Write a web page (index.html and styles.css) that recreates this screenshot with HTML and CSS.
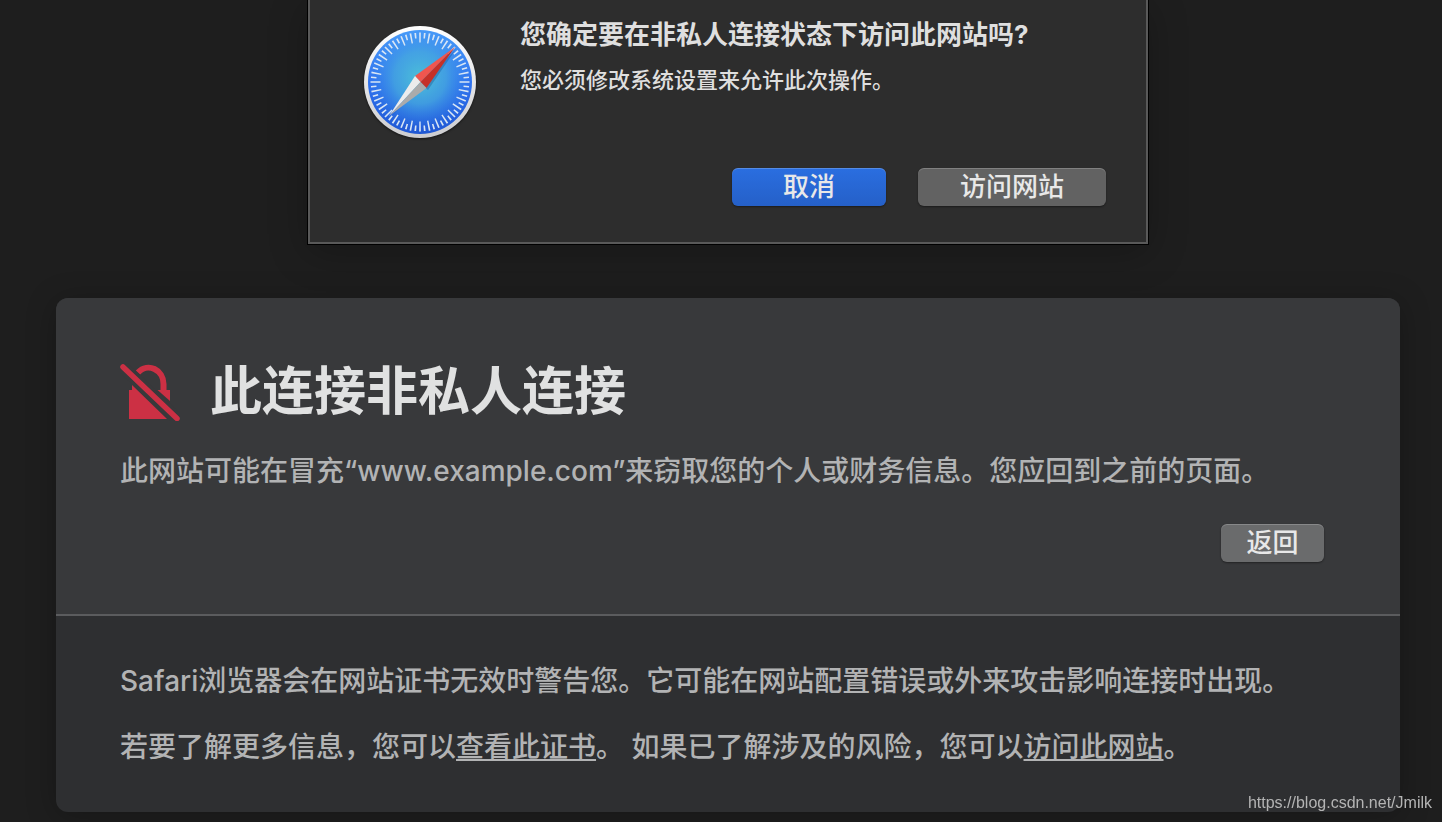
FILE: index.html
```html
<!DOCTYPE html>
<html lang="zh-CN">
<head>
    <meta charset="UTF-8">
    <meta name="viewport" content="width=device-width, initial-scale=1.0">
    <title>此连接非私人连接</title>
    <link rel="stylesheet" href="styles.css">
</head>
<body>
    <main class="page">
        <section class="dialog" role="alertdialog" aria-labelledby="dialogTitle" aria-describedby="dialogText">
            <svg class="compass" viewBox="0 0 112 112" aria-hidden="true">
                <defs>
                    <linearGradient id="ring" x1="0" y1="0" x2="0" y2="1">
                        <stop offset="0" stop-color="#ffffff"/>
                        <stop offset="1" stop-color="#cdcdd0"/>
                    </linearGradient>
                    <linearGradient id="edge" x1="0" y1="0" x2="0" y2="1">
                        <stop offset="0" stop-color="#4a9dfa"/>
                        <stop offset="0.5" stop-color="#2f72ef"/>
                        <stop offset="1" stop-color="#2058d4"/>
                    </linearGradient>
                    <radialGradient id="glow" cx="0.5" cy="0.46" r="0.5">
                        <stop offset="0" stop-color="#4cc0d8"/>
                        <stop offset="0.5" stop-color="#45a8df" stop-opacity="0.8"/>
                        <stop offset="1" stop-color="#3583ee" stop-opacity="0"/>
                    </radialGradient>
                </defs>
                <circle cx="56" cy="56" r="56" fill="url(#ring)"/>
                <circle cx="56" cy="56" r="52" fill="url(#edge)"/>
                <circle cx="56" cy="56" r="52" fill="url(#glow)"/>
                <!-- 32 long and 32 short ticks -->
                <circle cx="56" cy="56" r="44.500" fill="none" stroke="#d8e6f5" stroke-width="10" pathLength="320" stroke-dasharray="1.8 8.2" stroke-dashoffset="0.9"/>
                <circle cx="56" cy="56" r="46.500" fill="none" stroke="#d8e6f5" stroke-width="5.500" pathLength="320" stroke-dasharray="1.8 8.2" stroke-dashoffset="-4.1"/>
                <path d="M92 23L64 64L56 58L27 91Z" fill="#174886" opacity="0.35"/>
                <path d="M91 21L51 50L56.500 56Z" fill="#f0564f"/>
                <path d="M91 21L62.500 62L56.500 56Z" fill="#c63028"/>
                <path d="M25 90L51 50L56.500 56Z" fill="#ececec"/>
                <path d="M25 90L62.500 62L56.500 56Z" fill="#ababab"/>
            </svg>
            <div class="dialog-body">
                <h2 class="dialog-title" id="dialogTitle">您确定要在非私人连接状态下访问此网站吗?</h2>
                <p class="dialog-text" id="dialogText">您必须修改系统设置来允许此次操作。</p>
                <div class="dialog-actions">
                    <button class="button button-primary" type="button">取消</button>
                    <button class="button button-visit" type="button">访问网站</button>
                </div>
            </div>
        </section>

        <article class="card">
            <section class="card-main">
                <header class="card-header">
                    <svg class="lock" viewBox="0 0 60 58" aria-hidden="true">
                        <path d="M9 27H12V22L47 56H9Z" fill="#cc3044"/>
                        <path d="M18 9.500C28 -1 43.500 7 43.500 21V28" fill="none" stroke="#cc3044" stroke-width="6"/>
                        <path d="M37.500 27H50V38Z" fill="#cc3044"/>
                        <path d="M3 4L57 55.500" stroke="#38393b" stroke-width="12"/>
                        <path d="M3 4L57 55.500" stroke="#cc3044" stroke-width="5.500" stroke-linecap="round"/>
                    </svg>
                    <h1 class="card-title">此连接非私人连接</h1>
                </header>
                <p class="card-text">此网站可能在冒充“www.example.com”来窃取您的个人或财务信息。您应回到之前的页面。</p>
                <div class="card-actions">
                    <button class="button button-back" type="button">返回</button>
                </div>
            </section>
            <section class="card-details">
                <p class="card-text">Safari浏览器会在网站证书无效时警告您。它可能在网站配置错误或外来攻击影响连接时出现。</p>
                <p class="card-text">若要了解更多信息，您可以<a href="#certificate">查看此证书</a>。 如果已了解涉及的风险，您可以<a href="#visit">访问此网站</a>。</p>
            </section>
        </article>
    </main>
    <div class="watermark">https://blog.csdn.net/Jmilk</div>
</body>
</html>
```

FILE: styles.css
```css
* {
    box-sizing: border-box;
}

body {
    margin: 0;
    min-height: 100vh;
    background: #1e1e1e;
    color: #b2b3b4;
    font-family: Inter, "Noto Sans CJK SC", sans-serif;
    font-weight: 500;
}

h1,
h2,
p {
    margin: 0;
}

.page {
    padding: 0 42px 10px 56px;
}

.dialog {
    display: flex;
    gap: 44px;
    max-width: 840px;
    margin: 0 auto 54px;
    padding: 16px 40px 36px 54px;
    background: #2d2d2d;
    border: 2px solid #595959;
    border-top: none;
    outline: 1px solid #000;
    box-shadow: 0 8px 36px rgba(0, 0, 0, 0.25);
    color: #dfdfdf;
}

.compass {
    flex: none;
    width: 112px;
    height: 112px;
    margin-top: 10px;
    filter: drop-shadow(0 1px 1px rgba(0, 0, 0, 0.5));
}

.dialog-body {
    flex: 1;
}

.dialog-title {
    font-size: 26px;
    line-height: 38px;
    font-weight: 700;
}

.dialog-text {
    margin-top: 10px;
    font-size: 22px;
    line-height: 32px;
}

.dialog-actions,
.card-actions {
    display: flex;
    justify-content: flex-end;
    gap: 32px;
}

.dialog-actions {
    margin-top: 72px;
}

.button {
    height: 38px;
    padding: 0;
    border: none;
    border-radius: 6px;
    background: #626262;
    color: #e8e8e8;
    font-family: inherit;
    font-size: 26px;
    font-weight: 500;
    line-height: 38px;
    box-shadow: inset 0 1px 0 rgba(255, 255, 255, 0.2), 0 1px 2px rgba(0, 0, 0, 0.4);
}

.button-primary {
    width: 154px;
    background: linear-gradient(#2a6ee0, #2560c8);
}

.button-visit {
    width: 188px;
}

.button-back {
    width: 103px;
    background: #6a6b6c;
}

.card {
    border-radius: 12px;
    background: #2e2f31;
    overflow: hidden;
    box-shadow: 0 4px 30px rgba(0, 0, 0, 0.25);
}

.card-main {
    padding: 56px 64px 52px;
    background: #38393b;
    border-bottom: 2px solid #5b5c5e;
}

.card-header {
    display: flex;
    align-items: center;
    gap: 30px;
}

.lock {
    flex: none;
    width: 60px;
    height: 58px;
}

.card-title {
    color: #e0e1e1;
    font-size: 52px;
    line-height: 76px;
    font-weight: 700;
}

.card-text {
    font-size: 28px;
    line-height: 42px;
}

.card-main .card-text {
    margin-top: 20px;
}

.card-actions {
    margin-top: 32px;
    padding-right: 12px;
}

.card-details {
    display: grid;
    gap: 24px;
    padding: 44px 64px;
}

.card-text a {
    color: inherit;
    text-decoration-thickness: 2px;
    text-decoration-skip-ink: none;
    text-underline-offset: 2px;
}

.watermark {
    position: fixed;
    right: 10px;
    bottom: 10px;
    color: #b4b4b4;
    font-family: "Liberation Sans", Arial, sans-serif;
    font-size: 16px;
    font-weight: 400;
    line-height: 18px;
}
```
